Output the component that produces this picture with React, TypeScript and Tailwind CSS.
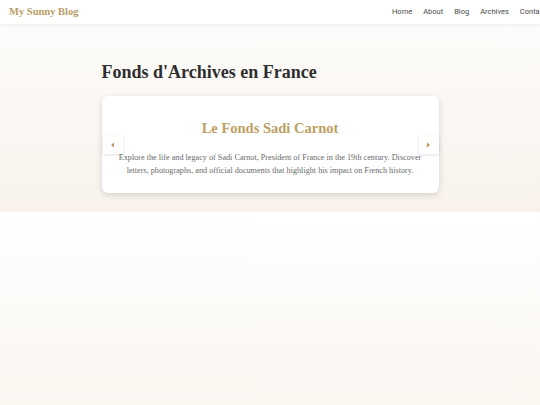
import React from "react";

const navItems = ["Home", "About", "Blog", "Archives", "Contact"];

function ArrowButton({ dir }: { dir: "left" | "right" }) {
  return (
    <button
      type="button"
      className="flex h-[19px] w-[20px] items-center justify-center bg-white shadow-[0_1px_3px_rgba(0,0,0,0.12)]"
    >
      <svg width="5" height="6" viewBox="0 0 5 6">
        {dir === "left" ? (
          <polygon points="4,0.5 4,5.5 1,3" fill="#b8995a" />
        ) : (
          <polygon points="1,0.5 1,5.5 4,3" fill="#b8995a" />
        )}
      </svg>
    </button>
  );
}

export default function App() {
  return (
    <div
      className="relative flex min-h-[405px] flex-col overflow-hidden bg-white"
      style={{ fontFamily: "Roboto, sans-serif" }}
    >
      <header className="relative z-10 flex h-[24px] items-center bg-white pl-[9px] shadow-[0_1px_4px_rgba(0,0,0,0.08)]">
        <div
          className="text-[10.5px] font-bold text-[#b89c62]"
          style={{ fontFamily: "'Liberation Serif', serif" }}
        >
          My Sunny Blog
        </div>
        <nav className="absolute left-[392px] top-0 flex h-full items-center gap-[11px] whitespace-nowrap text-[7.5px] text-[#4a4a4a]">
          {navItems.map((item) => (
            <span key={item}>{item}</span>
          ))}
        </nav>
      </header>

      <section className="h-[188px] bg-gradient-to-b from-[#fdfcfa] to-[#f8f2eb]">
        <div className="mx-auto w-[337px] pt-[35px]" style={{ fontFamily: "'Liberation Serif', serif" }}>
          <h1 className="text-[18px] font-bold leading-[26px] text-[#2e2e2e]">
            Fonds d'Archives en France
          </h1>
          <div className="relative mt-[11px] h-[97px] rounded-[6px] bg-white shadow-[0_2px_6px_rgba(0,0,0,0.15)]">
            <div className="pt-[22px] text-center">
              <h2 className="text-[14.5px] font-bold leading-[20px] text-[#bc9f62]">
                Le Fonds Sadi Carnot
              </h2>
              <p className="mt-[13px] whitespace-nowrap text-[8.2px] leading-[13px] text-[#6a6a6a]">
                Explore the life and legacy of Sadi Carnot, President of France in the 19th century. Discover
                <br />
                letters, photographs, and official documents that highlight his impact on French history.
              </p>
            </div>
            <div className="absolute left-[1px] top-[39px]">
              <ArrowButton dir="left" />
            </div>
            <div className="absolute right-0 top-[39px]">
              <ArrowButton dir="right" />
            </div>
          </div>
        </div>
      </section>

      <main className="flex-1 bg-gradient-to-b from-white to-[#faf6f0]" />
    </div>
  );
}
